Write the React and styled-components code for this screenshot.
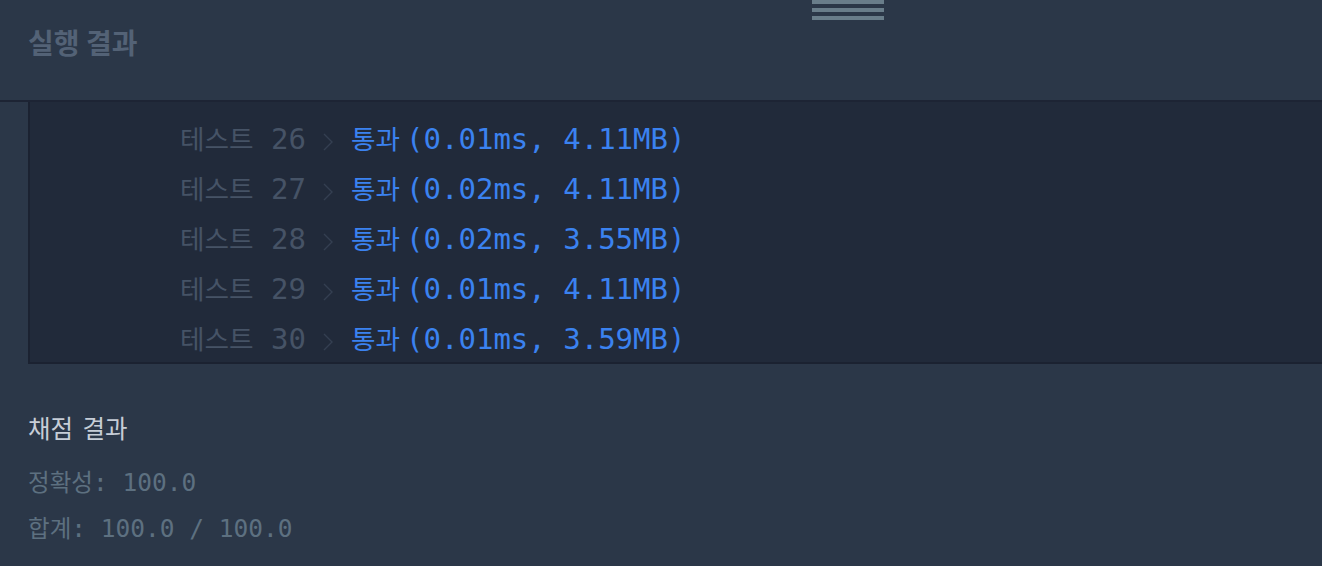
import styled, { createGlobalStyle } from "styled-components";

const rows = [
  { no: 26, time: "0.01ms", mem: "4.11MB" },
  { no: 27, time: "0.02ms", mem: "4.11MB" },
  { no: 28, time: "0.02ms", mem: "3.55MB" },
  { no: 29, time: "0.01ms", mem: "4.11MB" },
  { no: 30, time: "0.01ms", mem: "3.59MB" },
];

const Global = createGlobalStyle`
  html, body {
    margin: 0;
    background: #2b3748;
  }
  body {
    font-family: "DejaVu Sans Mono", "Noto Sans CJK KR", monospace;
  }
`;

function App() {
  return (
    <Page>
      <Global />
      <Grip>
        <span />
        <span />
        <span />
      </Grip>
      <Header>
        <Title>실행 결과</Title>
      </Header>
      <Console>
        {rows.map((r) => (
          <Row key={r.no}>
            <Label>
              <Ko>테스트</Ko> {r.no}
            </Label>
            <Chevron viewBox="0 0 10 18">
              <path d="M1 1 L9 9 L1 17" />
            </Chevron>
            <Pass>
              <Ko>통과 </Ko>({r.time}, {r.mem})
            </Pass>
          </Row>
        ))}
      </Console>
      <Score>
        <ScoreTitle>채점 결과</ScoreTitle>
        <ScoreLine>
          <Ko>정확성</Ko>: 100.0
        </ScoreLine>
        <ScoreLine>
          <Ko>합계</Ko>: 100.0 / 100.0
        </ScoreLine>
      </Score>
    </Page>
  );
}

const Page = styled.div`
  position: relative;
  width: 100%;
  height: 566px;
  overflow: hidden;
  background: #2b3748;
`;

const Grip = styled.div`
  position: absolute;
  top: 0;
  left: 812px;
  width: 72px;
  display: flex;
  flex-direction: column;
  gap: 4px;

  span {
    display: block;
    height: 4px;
    background: #697d8a;
  }
`;

const Header = styled.div`
  height: 100px;
  border-bottom: 2px solid #1d2434;
  display: flex;
  align-items: center;
  padding-left: 28px;
  box-sizing: content-box;
`;

const Title = styled.h2`
  margin: 0 0 16px;
  font-family: "Noto Sans CJK KR", sans-serif;
  font-size: 28px;
  font-weight: 700;
  color: #536276;
`;

const Console = styled.div`
  margin-left: 28px;
  padding: 10px 0 0 150px;
  height: 250px;
  background: #212a3a;
  border-left: 2px solid #1b2231;
  border-bottom: 2px solid #1b2231;
`;

const Row = styled.div`
  display: flex;
  align-items: center;
  height: 50px;
  font-size: 29px;
  white-space: pre;
`;

const Ko = styled.span`
  font-family: "Noto Sans CJK KR", sans-serif;
  font-size: 0.92em;
`;

const Label = styled.span`
  color: #465366;
`;

const Chevron = styled.svg`
  width: 10px;
  height: 18px;
  margin: 10px 18px 0 17px;
  fill: none;
  stroke: #343f51;
  stroke-width: 1.4;
`;

const Pass = styled.span`
  color: #3b82f0;
`;

const Score = styled.div`
  padding: 42px 28px 0;
  display: flex;
  flex-direction: column;
`;

const ScoreTitle = styled.div`
  font-family: "Noto Sans CJK KR", sans-serif;
  font-size: 24.5px;
  color: #c6cdd7;
  line-height: 44px;
  word-spacing: 4px;
  margin-bottom: 9px;
`;

const ScoreLine = styled.div`
  font-size: 24.5px;
  color: #5d7080;
  line-height: 45px;
  white-space: pre;

  ${Ko} {
    font-size: 0.96em;
  }
`;

export default App;
